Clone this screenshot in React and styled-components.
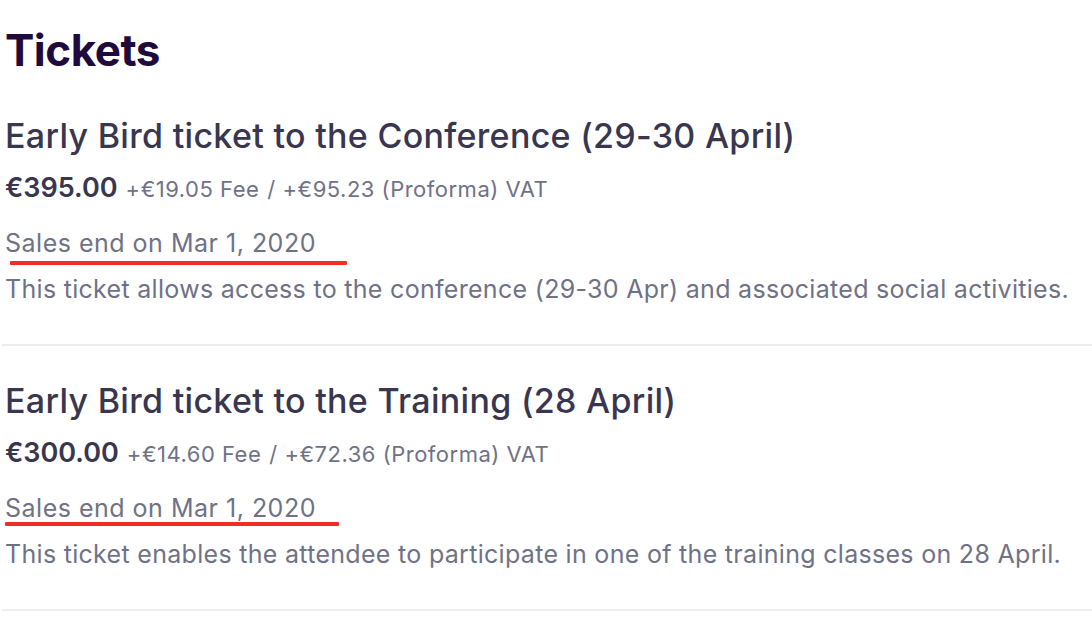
import React from "react";
import styled, { createGlobalStyle } from "styled-components";

const Global = createGlobalStyle`
  html, body { margin: 0; padding: 0; background: #ffffff; }
  body { font-family: "Inter", "Liberation Sans", sans-serif; -webkit-font-smoothing: antialiased; }
`;

const Page = styled.main`
  width: 1092px;
  height: 628px;
  overflow: hidden;
  box-sizing: border-box;
  padding: 27px 0 0 5px;
`;

const Heading = styled.h1`
  margin: 0 0 43px 0;
  font-size: 44px;
  line-height: 46px;
  font-weight: 700;
  color: #1e0a3c;
  letter-spacing: -0.5px;
`;

const TicketList = styled.section`
  display: flex;
  flex-direction: column;
`;

const Ticket = styled.article`
  display: flex;
  flex-direction: column;
  padding-bottom: 39px;
  margin-bottom: 35px;
  border-bottom: 2px solid #eeedf2;
  margin-left: -3px;
  padding-left: 3px;
`;

const Title = styled.h2`
  margin: 0;
  font-size: 34px;
  line-height: 40px;
  font-weight: 500;
  letter-spacing: 0.3px;
  color: #39364f;
`;

const PriceRow = styled.div`
  display: flex;
  align-items: baseline;
  gap: 8px;
  margin-top: 16px;
  line-height: 32px;
`;

const Price = styled.span`
  font-size: 27px;
  font-weight: 600;
  color: #39364f;
`;

const Fee = styled.span`
  font-size: 22px;
  letter-spacing: 0.5px;
  color: #6f7287;
`;

const SalesEnd = styled.p`
  margin: 22px 0 0 0;
  font-size: 25px;
  line-height: 32px;
  letter-spacing: 0.5px;
  color: #6f7287;
`;

const Mark = styled.div`
  height: 4px;
  width: ${(p) => p.$width}px;
  margin-left: ${(p) => p.$offset}px;
  margin-top: ${(p) => p.$top}px;
  margin-bottom: ${(p) => 10 - p.$top}px;
  background: #ee2f25;
  border-radius: 1px;
`;

const Description = styled.p`
  margin: 0;
  font-size: 25px;
  line-height: 32px;
  letter-spacing: 0.3px;
  color: #6f7287;
`;

const tickets = [
  {
    title: "Early Bird ticket to the Conference (29-30 April)",
    price: "€395.00",
    fee: "+€19.05 Fee",
    vat: "/ +€95.23 (Proforma) VAT",
    ends: "Sales end on Mar 1, 2020",
    desc: "This ticket allows access to the conference (29-30 Apr) and associated social activities.",
    mark: { width: 337, offset: 5, top: 2 },
  },
  {
    title: "Early Bird ticket to the Training (28 April)",
    price: "€300.00",
    fee: "+€14.60 Fee",
    vat: "/ +€72.36 (Proforma) VAT",
    ends: "Sales end on Mar 1, 2020",
    desc: "This ticket enables the attendee to participate in one of the training classes on 28 April.",
    mark: { width: 334, offset: 0, top: -2 },
  },
];

export default function App() {
  return (
    <>
      <Global />
      <Page>
        <Heading>Tickets</Heading>
        <TicketList>
          {tickets.map((t) => (
            <Ticket key={t.title}>
              <Title>{t.title}</Title>
              <PriceRow>
                <Price>{t.price}</Price>
                <Fee>{t.fee}</Fee>
                <Fee>{t.vat}</Fee>
              </PriceRow>
              <SalesEnd>{t.ends}</SalesEnd>
              <Mark $width={t.mark.width} $offset={t.mark.offset} $top={t.mark.top} />
              <Description>{t.desc}</Description>
            </Ticket>
          ))}
        </TicketList>
      </Page>
    </>
  );
}
